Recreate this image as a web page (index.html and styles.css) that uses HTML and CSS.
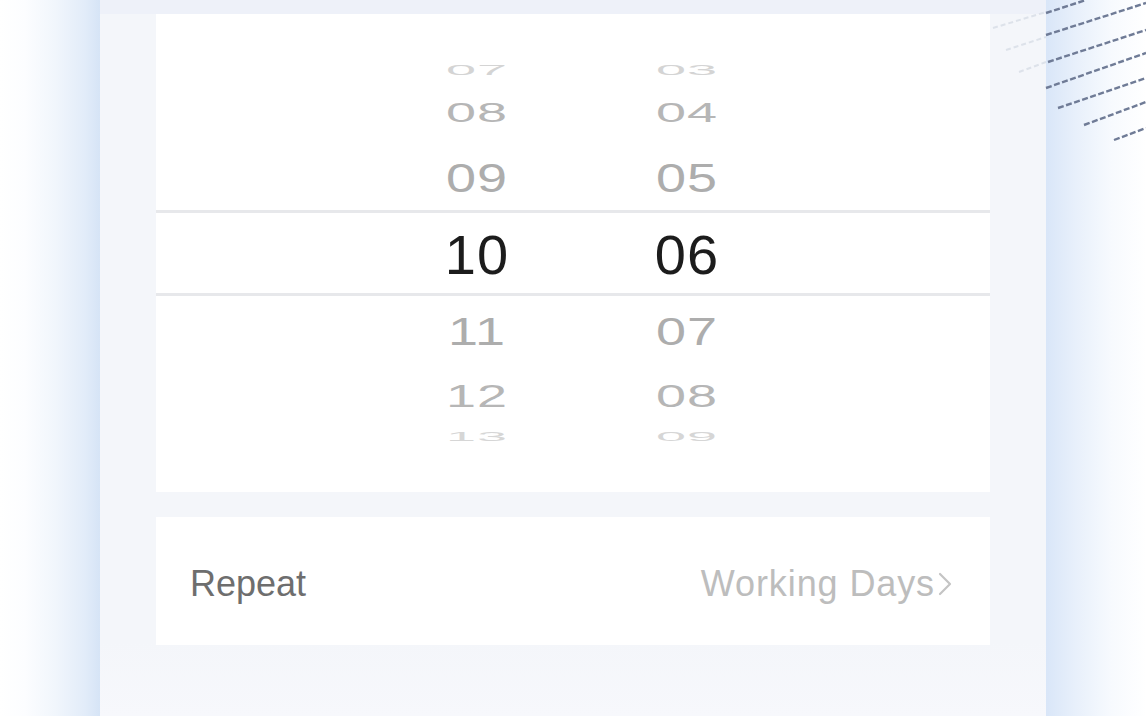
FILE: index.html
```html
<!DOCTYPE html>
<html lang="en">
<head>
<meta charset="utf-8">
<title>Alarm time</title>
<link rel="stylesheet" href="styles.css">
</head>
<body>
<div class="page">
  <div class="side side-left"></div>
  <main class="phone">
    <section class="picker">
      <div class="wheels">
        <div class="wheel">
          <div class="row r-far-top"><span>07</span></div>
          <div class="row r-near2-top"><span>08</span></div>
          <div class="row r-near1-top"><span>09</span></div>
          <div class="row r-sel"><span>10</span></div>
          <div class="row r-near1-bot"><span>11</span></div>
          <div class="row r-near2-bot"><span>12</span></div>
          <div class="row r-far-bot"><span>13</span></div>
        </div>
        <div class="wheel">
          <div class="row r-far-top"><span>03</span></div>
          <div class="row r-near2-top"><span>04</span></div>
          <div class="row r-near1-top"><span>05</span></div>
          <div class="row r-sel"><span>06</span></div>
          <div class="row r-near1-bot"><span>07</span></div>
          <div class="row r-near2-bot"><span>08</span></div>
          <div class="row r-far-bot"><span>09</span></div>
        </div>
      </div>
      <div class="selection"></div>
    </section>
    <section class="setting">
      <span class="label">Repeat</span>
      <span class="value">Working Days<svg class="chev" viewBox="0 0 14 26" width="14" height="26"><path d="M2 3 L12 13 L2 23" fill="none" stroke="#c4c4c4" stroke-width="2.2" stroke-linecap="round" stroke-linejoin="round"/></svg></span>
    </section>
  </main>
  <div class="side side-right"></div>
  <svg class="stripes" viewBox="0 0 156 150" width="156" height="150">
    <g stroke="#dde2ea" stroke-width="2" stroke-dasharray="5 3" fill="none">
      <line x1="3" y1="28" x2="56" y2="12"/>
      <line x1="16" y1="50" x2="56" y2="37"/>
      <line x1="29" y1="72" x2="56" y2="62"/>
    </g>
    <g stroke="#6f7b96" stroke-width="2.4" stroke-dasharray="6 2.5" fill="none">
      <line x1="56" y1="13" x2="96" y2="0"/>
      <line x1="56" y1="35" x2="156" y2="3"/>
      <line x1="58" y1="62" x2="156" y2="30"/>
      <line x1="56" y1="88" x2="156" y2="53"/>
      <line x1="68" y1="108" x2="156" y2="78"/>
      <line x1="94" y1="125" x2="156" y2="102"/>
      <line x1="124" y1="140" x2="156" y2="128"/>
    </g>
  </svg>
</div>
</body>
</html>
```
FILE: styles.css
```css
* { box-sizing: border-box; }
html, body { margin: 0; padding: 0; }
body {
  background: #ffffff;
  font-family: "Liberation Sans", Arial, sans-serif;
  width: 1146px;
  height: 716px;
  overflow: hidden;
}
.page {
  position: relative;
  display: flex;
  width: 1146px;
  height: 716px;
}
.side { width: 100px; flex: none; }
.side-left {
  background: linear-gradient(to right, #ffffff 0%, #fcfdff 25%, #f1f6fc 55%, #e2ecf9 85%, #d6e4f6 100%);
}
.side-right {
  background: linear-gradient(to right, #d9e6f8 0%, #e8f0fb 30%, #f7fafe 65%, #ffffff 100%);
}
.phone {
  flex: none;
  width: 946px;
  height: 716px;
  padding: 14px 56px 0;
  background: linear-gradient(to bottom, #eef1f9 0, #eef1f9 14px, #f4f6fa 14px, #f4f6fa 640px, #f7f8fc 716px);
  display: flex;
  flex-direction: column;
  gap: 25px;
}
.picker {
  position: relative;
  height: 478px;
  background: #ffffff;
  padding-top: 50px;
}
.wheels {
  display: flex;
  gap: 90px;
  padding-left: 261px;
  height: 380px;
}
.wheel {
  width: 120px;
  display: flex;
  flex-direction: column;
}
.row {
  display: flex;
  align-items: center;
  justify-content: center;
  flex: none;
}
.row span {
  display: inline-block;
  font-size: 54px;
  line-height: 1;
  letter-spacing: 1px;
  color: #adadad;
}
.r-far-top { margin-top: -15px; height: 42px; }
.r-far-top span { transform: scaleY(0.28); color: #d4d4d4; }
.r-near2-top { height: 42px; }
.r-near2-top span { transform: scaleY(0.52); color: #b6b6b6; }
.r-near1-top { height: 88px; }
.r-near1-top span { transform: scaleY(0.77); color: #adadad; }
.r-sel { height: 68px; }
.r-sel span { font-size: 56px; color: #1c1c1c; }
.r-near1-bot { height: 84px; }
.r-near1-bot span { transform: scaleY(0.72); color: #adadad; }
.r-near2-bot { height: 46px; }
.r-near2-bot span { transform: scaleY(0.58); color: #b6b6b6; }
.r-far-bot { height: 34px; }
.r-far-bot span { transform: scaleY(0.24); color: #d6d6d6; }
.selection {
  position: absolute;
  left: 0;
  right: 0;
  top: 196px;
  height: 86px;
  border-top: 3px solid #e7e8eb;
  border-bottom: 3px solid #e7e8eb;
  pointer-events: none;
}
.setting {
  height: 128px;
  background: #ffffff;
  display: flex;
  align-items: center;
  justify-content: space-between;
  padding: 5px 38px 0 34px;
}
.label {
  font-size: 36px;
  color: #6e6e6e;
}
.value {
  display: flex;
  align-items: center;
  gap: 3px;
  font-size: 36px;
  letter-spacing: 0.9px;
  color: #bdbdbd;
}
.chev { display: block; }
.stripes {
  position: absolute;
  left: 990px;
  top: 0;
}
```
